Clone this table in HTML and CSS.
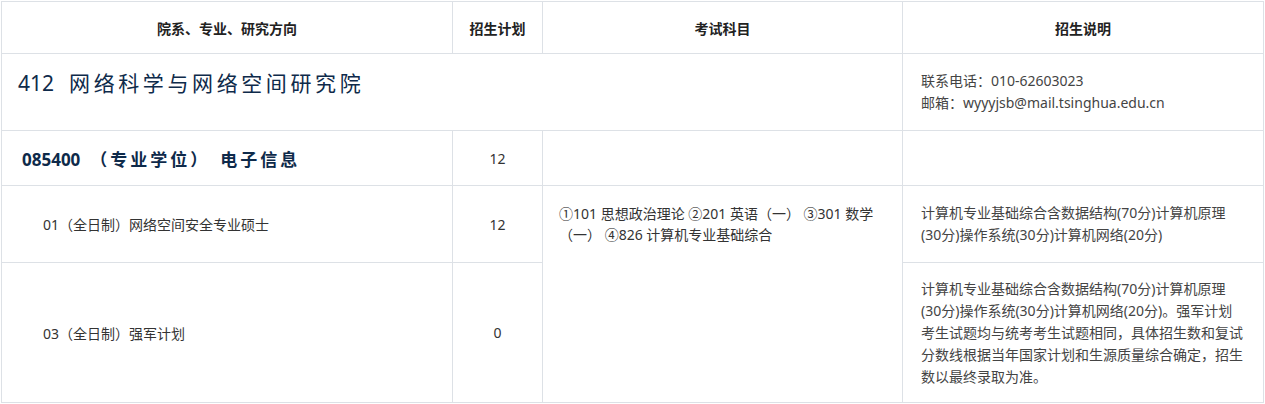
FILE: index.html
```html
<!DOCTYPE html>
<html lang="zh-CN">
<head>
<meta charset="utf-8">
<title>招生专业目录</title>
<link rel="stylesheet" href="styles.css">
</head>
<body>
<div class="wrap">
<table class="catalog">
  <colgroup>
    <col class="c1"><col class="c2"><col class="c3"><col class="c4">
  </colgroup>
  <thead>
    <tr class="r-head">
      <th>院系、专业、研究方向</th>
      <th>招生计划</th>
      <th>考试科目</th>
      <th>招生说明</th>
    </tr>
  </thead>
  <tbody>
    <tr class="r-dept">
      <td colspan="3" class="dept"><span class="num">412</span><span class="name">网络科学与网络空间研究院</span></td>
      <td class="note">联系电话：010-62603023<br>邮箱：wyyyjsb@mail.tsinghua.edu.cn</td>
    </tr>
    <tr class="r-major">
      <td class="major"><span class="num">085400</span><span class="name">（专业学位）</span><span class="name sub">电子信息</span></td>
      <td class="plan">12</td>
      <td></td>
      <td></td>
    </tr>
    <tr class="r-dir1">
      <td class="dir">01（全日制）网络空间安全专业硕士</td>
      <td class="plan">12</td>
      <td rowspan="2" class="exam">①101 思想政治理论 ②201 英语（一） ③301 数学（一） ④826 计算机专业基础综合</td>
      <td class="note">计算机专业基础综合含数据结构(70分)计算机原理(30分)操作系统(30分)计算机网络(20分)</td>
    </tr>
    <tr class="r-dir2">
      <td class="dir">03（全日制）强军计划</td>
      <td class="plan">0</td>
      <td class="note">计算机专业基础综合含数据结构(70分)计算机原理(30分)操作系统(30分)计算机网络(20分)。强军计划考生试题均与统考考生试题相同，具体招生数和复试分数线根据当年国家计划和生源质量综合确定，招生数以最终录取为准。</td>
    </tr>
  </tbody>
</table>
</div>
</body>
</html>
```

FILE: styles.css
```css
html, body {
  margin: 0;
  padding: 0;
  background: #ffffff;
}

body {
  font-family: "Noto Sans", "Noto Sans CJK SC", sans-serif;
  color: #333333;
  font-size: 14px;
}

.wrap {
  padding: 1px 0 0 1px;
}

.catalog {
  border-collapse: collapse;
  table-layout: fixed;
  width: 1262px;
}

.c1 { width: 451px; }
.c2 { width: 90px; }
.c3 { width: 360px; }
.c4 { width: 361px; }

.catalog th,
.catalog td {
  border: 1px solid #dde1e6;
  padding: 0;
  vertical-align: middle;
}

.catalog th {
  font-weight: bold;
  font-size: 14px;
  color: #222;
  text-align: center;
}

.r-head { height: 52px; }
.r-dept { height: 77px; }
.r-major { height: 55px; }
.r-dir1 { height: 77px; }
.r-dir2 { height: 140px; }

.catalog td.dept {
  padding: 0 0 20px 16px;
  color: #0e2a4a;
  font-size: 21px;
}

.dept .num {
  margin-right: 15px;
}

.dept .name {
  letter-spacing: 3.6px;
}

.catalog td.major {
  padding-left: 20px;
  font-weight: bold;
  font-size: 17px;
  color: #0e2a4a;
}

.major .num {
  margin-right: 10px;
}

.major .name {
  letter-spacing: 3px;
}

.major .sub {
  margin-left: 10px;
}

.catalog td.dir {
  padding-left: 41px;
  font-size: 14px;
}

.catalog td.plan {
  text-align: center;
  font-size: 14px;
}

.catalog td.exam {
  vertical-align: top;
  padding: 17px 14px 0 16px;
  line-height: 21px;
}

.catalog td.note {
  padding: 0 20px 0 18px;
  line-height: 22px;
  color: #444;
}
```
